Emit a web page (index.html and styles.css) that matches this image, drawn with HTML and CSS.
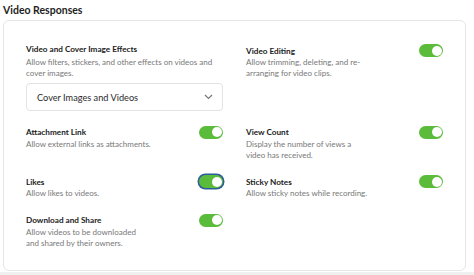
FILE: index.html
```html
<!DOCTYPE html>
<html lang="en">
<head>
  <meta charset="UTF-8" />
  <title>Video Responses</title>
  <link rel="stylesheet" href="styles.css">
</head>
<body>
  <div class="page">
    <h2 class="section-title">Video Responses</h2>
    <div class="settings-card">
      <div class="setting">
        <div class="setting-head plain">
          <span class="setting-name">Video and Cover Image Effects</span>
        </div>
        <p class="setting-desc wide">Allow filters, stickers, and other effects on videos and cover images.</p>
        <div class="select-box">
          <span>Cover Images and Videos</span>
          <svg class="chevron" width="9" height="6" viewBox="0 0 9 6"><path d="M1 1l3.5 3.5L8 1" fill="none" stroke="#777" stroke-width="1.2"/></svg>
        </div>
      </div>

      <div class="setting">
        <div class="setting-head">
          <span class="setting-name">Video Editing</span>
          <span class="toggle on"></span>
        </div>
        <p class="setting-desc">Allow trimming, deleting, and re-arranging for video clips.</p>
      </div>

      <div class="setting">
        <div class="setting-head">
          <span class="setting-name">Attachment Link</span>
          <span class="toggle on"></span>
        </div>
        <p class="setting-desc">Allow external links as attachments.</p>
      </div>

      <div class="setting">
        <div class="setting-head">
          <span class="setting-name">View Count</span>
          <span class="toggle on"></span>
        </div>
        <p class="setting-desc">Display the number of views a video has received.</p>
      </div>

      <div class="setting">
        <div class="setting-head">
          <span class="setting-name">Likes</span>
          <span class="toggle on focused"></span>
        </div>
        <p class="setting-desc">Allow likes to videos.</p>
      </div>

      <div class="setting">
        <div class="setting-head">
          <span class="setting-name">Sticky Notes</span>
          <span class="toggle on"></span>
        </div>
        <p class="setting-desc">Allow sticky notes while recording.</p>
      </div>

      <div class="setting">
        <div class="setting-head">
          <span class="setting-name">Download and Share</span>
          <span class="toggle on"></span>
        </div>
        <p class="setting-desc">Allow videos to be downloaded<br>and shared by their owners.</p>
      </div>
    </div>
  </div>
  <div class="page-bottom"></div>
</body>
</html>
```

FILE: styles.css
```css
* {
  margin: 0;
  padding: 0;
  box-sizing: border-box;
}

body {
  font-family: Lato, "Open Sans", sans-serif;
  background-color: #fff;
  color: #222;
  width: 474px;
  height: 275px;
  overflow: hidden;
}

.page {
  padding: 0 8px 0 3px;
}

.section-title {
  font-size: 10.5px;
  font-weight: 700;
  line-height: 20px;
  color: #1e1e1e;
}

.settings-card {
  border: 1px solid #e6e6e6;
  border-radius: 6px;
  padding: 23px 22px 21px 22px;
  display: grid;
  grid-template-columns: 1fr 1fr;
  column-gap: 23px;
  row-gap: 14px;
  height: 251px;
}

.setting-head {
  display: flex;
  align-items: center;
  justify-content: space-between;
  height: 13px;
}

.setting-head.plain {
  align-items: flex-start;
}

.setting-name {
  font-size: 8.2px;
  font-weight: 700;
  line-height: 10px;
  color: #222;
}

.setting-desc {
  font-size: 8px;
  line-height: 11px;
  color: #787878;
  max-width: 126px;
}

.setting-desc.wide {
  max-width: none;
}

.select-box {
  margin-top: 4px;
  height: 28px;
  border: 1px solid #e3e3e3;
  border-radius: 4px;
  display: flex;
  align-items: center;
  justify-content: space-between;
  padding: 0 9px 0 10px;
  font-size: 9.2px;
  color: #2a2a2a;
}

.toggle {
  position: relative;
  width: 24px;
  height: 13px;
  border-radius: 7px;
  background-color: #5bbb3b;
  flex-shrink: 0;
}

.toggle::after {
  content: "";
  position: absolute;
  top: 1.5px;
  right: 1.5px;
  width: 10px;
  height: 10px;
  border-radius: 50%;
  background-color: #fff;
}

.toggle.focused {
  box-shadow: 0 0 0 1.5px #2c5d9c;
}

.page-bottom {
  margin-top: 1px;
  height: 4px;
  background-color: #f0f0f0;
}
```
